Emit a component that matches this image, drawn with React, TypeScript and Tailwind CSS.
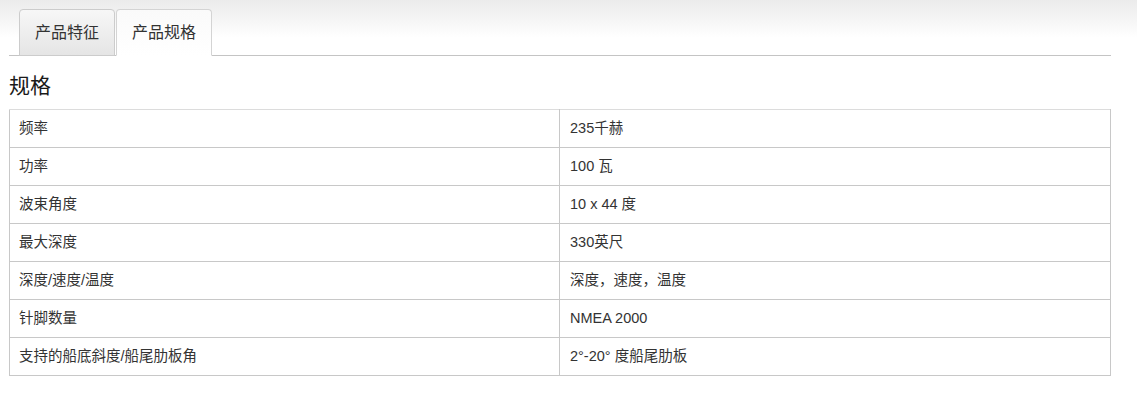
import React from "react";

const rows: [string, string][] = [
  ["频率", "235千赫"],
  ["功率", "100 瓦"],
  ["波束角度", "10 x 44 度"],
  ["最大深度", "330英尺"],
  ["深度/速度/温度", "深度，速度，温度"],
  ["针脚数量", "NMEA 2000"],
  ["支持的船底斜度/船尾肋板角", "2°-20° 度船尾肋板"],
];

export default function App() {
  return (
    <div
      className="w-[1137px] h-[399px] bg-white bg-[linear-gradient(to_bottom,#ebebeb_0px,#ffffff_38px)] bg-no-repeat pt-[9px] text-[#333]"
      style={{ fontFamily: '"Liberation Sans", "Noto Sans CJK SC", sans-serif' }}
    >
      <div className="ml-[9px] w-[1102px]">
        <ul className="flex gap-[1px] pl-[10px] border-b border-[#c4c4c4]">
          <li className="-mb-px h-[47px] px-[15px] border border-[#cccccc] rounded-t-[4px] bg-[linear-gradient(to_bottom,#f7f7f7,#e5e5e5)] text-[16px] leading-[45px] text-[#333]">
            产品特征
          </li>
          <li className="-mb-px h-[47px] px-[15px] border border-[#d4d4d4] border-b-white rounded-t-[4px] bg-[linear-gradient(to_bottom,#fafafa,#ffffff)] text-[16px] leading-[45px] text-[#333]">
            产品规格
          </li>
        </ul>
        <h2 className="mt-[18px] text-[21px] leading-[24px] text-[#1a1a1a] font-normal">规格</h2>
        <table className="mt-[11px] w-full border-collapse border border-[#c8c8c8] text-[14.5px]">
          <tbody>
            {rows.map(([k, v], i) => (
              <tr key={i} className="h-[38px]">
                <td className={`w-[550px] border border-[#c8c8c8] px-[9px] align-middle ${i === 0 ? "border-t-[#dcdcdc]" : ""}`}>{k}</td>
                <td className={`border border-[#c8c8c8] px-[10px] align-middle ${i === 0 ? "border-t-[#dcdcdc]" : ""}`}>{v}</td>
              </tr>
            ))}
          </tbody>
        </table>
      </div>
    </div>
  );
}
